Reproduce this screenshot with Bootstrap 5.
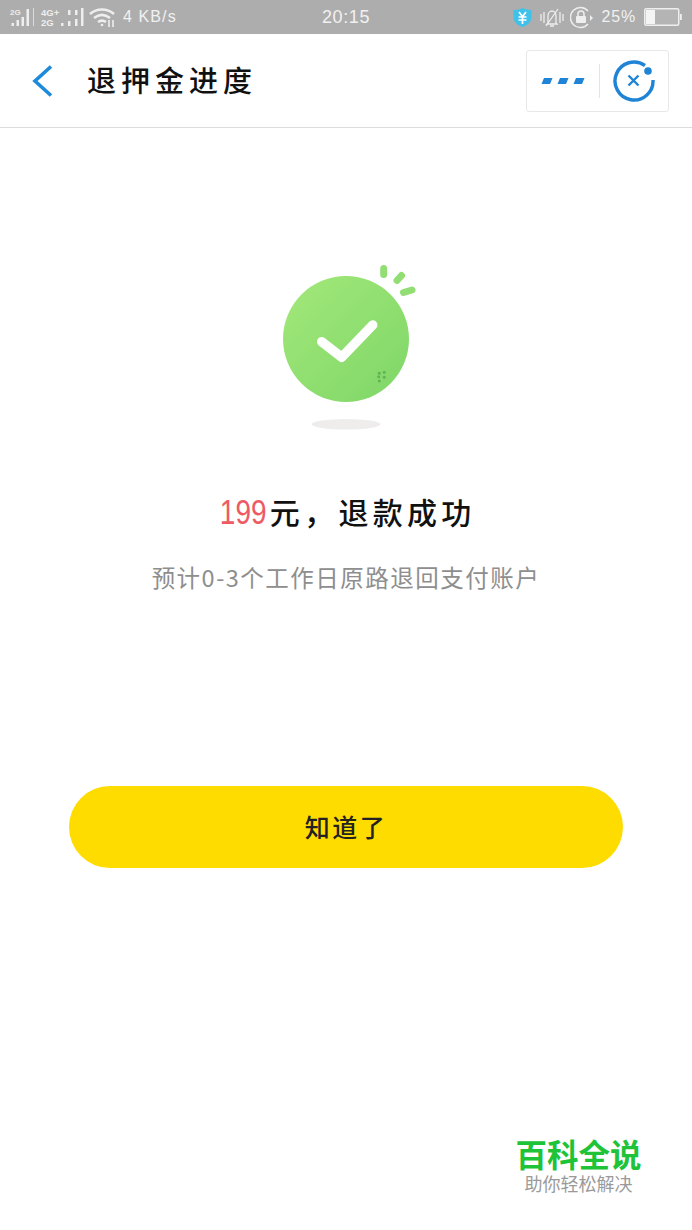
<!DOCTYPE html>
<html lang="zh">
<head>
<meta charset="utf-8">
<title>退押金进度</title>
<link href="https://cdn.jsdelivr.net/npm/bootstrap@5.3.0/dist/css/bootstrap.min.css" rel="stylesheet">
<style>
html,body{width:692px;height:1230px;overflow:hidden;background:#fff;}
body{font-family:"Noto Sans CJK SC","Noto Sans",sans-serif;color:#111;}
.sbar{height:34px;background:#adadad;color:#f1f1f1;padding:0 10px 0 10px;}
.sbar svg{display:block;}
.sb-left{width:249px;gap:5px;}
.sb-speed{font-family:"Liberation Sans",sans-serif;font-size:16px;letter-spacing:1.100px;}
.sb-time{font-family:"Liberation Sans",sans-serif;font-size:18px;letter-spacing:.6px;width:76px;margin-left:49px;text-align:center;}
.sb-right{gap:8px;margin-left:auto;}
.sb-mute{margin:0 -2px 0 -1px;}
.sb-pct{font-family:"Liberation Sans",sans-serif;font-size:16px;letter-spacing:.8px;}
.topbar{height:94px;border-bottom:1px solid #dcdcdc;padding:0 23px 0 31px;}
.back-ic{width:24px;height:34px;margin-right:32px;}
.page-title{font-size:29px;font-weight:500;letter-spacing:5px;margin:0 0 4px;line-height:40px;color:#111;}
.capsule{width:143px;height:62px;margin-left:auto;border:1px solid #e8e8e8;border-radius:3px;}
.capsule-l{width:73px;height:34px;border-right:1px solid #e4e4e4;}
.capsule-r{flex:1;}
.hero{margin-top:136px;}
.hero svg{display:block;}
.result-title{margin:57px 0 0;padding-left:3px;font-size:30px;font-weight:500;line-height:44px;letter-spacing:4.300px;color:#111;}
.amount{display:inline-block;font-family:"Liberation Sans",sans-serif;font-weight:400;color:#ee5a64;font-size:35px;letter-spacing:0;line-height:44px;transform:scaleX(.8);margin:0 -3px 0 -5px;}
.result-sub{margin:26px 0 0;font-size:23.5px;line-height:34px;color:#8e8e8e;letter-spacing:1.500px;}
.know-btn{display:block;width:554px;height:82px;margin:192px auto 0;border:0;border-radius:41px;background:#ffdc00;color:#222;font-size:25px;font-weight:500;letter-spacing:2.500px;}
.know-btn:hover,.know-btn:active{background:#ffdc00!important;color:#222!important;}
.wm{position:absolute;left:510px;top:1139px;width:137px;text-align:center;font-family:"Liberation Sans","Noto Sans CJK SC",sans-serif;}
.wm-a{font-size:31.500px;line-height:35px;font-weight:700;color:#1ec337;white-space:nowrap;}
.wm-b{font-size:18px;line-height:21px;margin-top:1px;color:#9a9a9a;white-space:nowrap;}
</style>
</head>
<body>
<div class="sbar d-flex align-items-center">
  <div class="sb-left d-flex align-items-center">
    <svg width="26" height="20" viewBox="0 0 26 20" fill="#eee"><text x="0" y="8" font-size="8" font-weight="700" font-family="Liberation Sans">2G</text><rect x="1.500" y="16" width="2.500" height="3"/><rect x="6.500" y="13" width="2.500" height="6"/><rect x="11.500" y="10" width="2.500" height="9"/><rect x="16.500" y="2" width="2.500" height="17"/><rect x="23" y="1" width="1" height="18" opacity=".7"/></svg>
    <svg width="43" height="20" viewBox="0 0 43 20" fill="#eee"><text x="0" y="9" font-size="9.500" font-weight="700" font-family="Liberation Sans">4G+</text><text x="0" y="19" font-size="9.500" font-weight="700" font-family="Liberation Sans">2G</text><rect x="20" y="16" width="2.500" height="3"/><rect x="27" y="14" width="2.500" height="5"/><rect x="27" y="3" width="2.500" height="5"/><rect x="34" y="12" width="2.500" height="7"/><rect x="34" y="3" width="2.500" height="5"/><rect x="40" y="1" width="2.500" height="18"/></svg>
    <svg width="29" height="20" viewBox="0 0 29 20" fill="none" stroke="#eee" stroke-width="2.600"><path d="M1 7c7-6 17-6 24 0M5 11c5-4 11-4 16 0M9 15c3-2 5-2 8 0"/><path d="M20 13v7M24 13v7" stroke-width="1.600"/><circle cx="13" cy="18" r="1.300" fill="#eee" stroke="none"/></svg>
    <span class="sb-speed">4 KB/s</span>
  </div>
  <div class="sb-time">20:15</div>
  <div class="sb-right d-flex align-items-center">
    <svg width="21" height="21" viewBox="0 0 21 21"><path d="M10.500 1c3 1.600 6 2 9 2v7c0 5-4 8.500-9 10-5-1.500-9-5-9-10V3c3 0 6-.4 9-2z" fill="#3fc1ea"/><path d="M7 5l3.500 4.500L14 5M6.500 10h8M6.500 13h8M10.500 9.500V17" fill="none" stroke="#fff" stroke-width="1.700"/></svg>
    <svg class="sb-mute" width="24" height="21" viewBox="0 0 24 21" fill="none" stroke="#eee" stroke-width="1.300"><path d="M8 16V9c0-3 2-5 4-5s4 2 4 5v7l1 1H7zM10 19h4M6 19L18 2M1 7v7M4 5v11M20 5v11M23 7v7"/></svg>
    <svg width="24" height="23" viewBox="0 0 24 23" fill="none" stroke="#eee" stroke-width="1.500"><path d="M18 18A10 10 0 1 1 18 5"/><path d="M20 9l3 3-3 3" fill="#eee" stroke="none"/><rect x="6" y="10" width="10" height="7" rx="1" fill="#eee" stroke="none"/><path d="M8 10V8a3 3 0 0 1 6 0v2"/></svg>
    <span class="sb-pct">25%</span>
    <svg width="38" height="18" viewBox="0 0 38 18"><rect x=".75" y=".75" width="34" height="16.500" rx="1.500" fill="#b4b4b4" stroke="#eee" stroke-width="1.500"/><rect x="2" y="2" width="9" height="14" fill="#f4f4f4"/><rect x="36" y="6" width="1.800" height="6" fill="#eee"/></svg>
  </div>
</div>

<header class="topbar d-flex align-items-center">
  <svg class="back-ic" viewBox="0 0 24 34" fill="none" stroke="#1f8ada" stroke-width="3.600"><path d="M20 2.500L4 17l16 14.500"/></svg>
  <h1 class="page-title">退押金进度</h1>
  <div class="capsule d-flex align-items-center">
    <div class="capsule-l d-flex align-items-center justify-content-center">
      <svg width="44" height="8" viewBox="0 0 44 8" fill="#1f83d6"><path d="M3 1h8.500l-2.500 6H.5zM19 1h8.500l-2.500 6H16.500zM35 1h8.500l-2.500 6H32.500z"/></svg>
    </div>
    <div class="capsule-r d-flex align-items-center justify-content-center">
      <svg width="44" height="44" viewBox="0 0 44 44" fill="none" stroke="#1f83d6"><path d="M33 6.500A19 19 0 1 0 41 21" stroke-width="3.400"/><circle cx="36" cy="12" r="3.800" fill="#1f83d6" stroke="none"/><path d="M16.500 16.500l10 10M26.500 16.500l-10 10" stroke-width="2.400"/></svg>
    </div>
  </div>
</header>

<main class="text-center">
  <div class="hero d-flex justify-content-center">
    <svg width="140" height="168" viewBox="0 0 140 168" fill="none">
      <defs><linearGradient id="gr" x1="0" y1="0" x2="1" y2="1"><stop offset="0" stop-color="#a3e87a"/><stop offset="1" stop-color="#7ed667"/></linearGradient></defs>
      <circle cx="70" cy="75" r="63" fill="url(#gr)"/>
      <path d="M45.700 77.700l20 15.600 31-32.300" stroke="#fff" stroke-width="9.500" stroke-linecap="round" stroke-linejoin="round"/>
      <g stroke="#92de74" stroke-width="7" stroke-linecap="round"><path d="M107.700 4.500v6M125.500 11.500l-4.500 5M136 26l-8.500 2.500"/></g>
      <g fill="#5fb455"><circle cx="103.300" cy="109.300" r="1.500"/><circle cx="108.300" cy="108.300" r="1.500"/><circle cx="102.700" cy="112.700" r="1.500"/><circle cx="108.300" cy="113.300" r="1.500"/><circle cx="103.300" cy="117" r="1.500"/></g>
      <ellipse cx="70" cy="160.300" rx="34.500" ry="5.300" fill="#efecec"/>
    </svg>
  </div>
  <h2 class="result-title"><span class="amount">199</span>元，退款成功</h2>
  <p class="result-sub">预计0-3个工作日原路退回支付账户</p>
  <button type="button" class="btn know-btn">知道了</button>
</main>

<div class="wm">
  <div class="wm-a">百科全说</div>
  <div class="wm-b">助你轻松解决</div>
</div>
<script src="https://cdn.jsdelivr.net/npm/bootstrap@5.3.0/dist/js/bootstrap.bundle.min.js"></script>
</body>
</html>
